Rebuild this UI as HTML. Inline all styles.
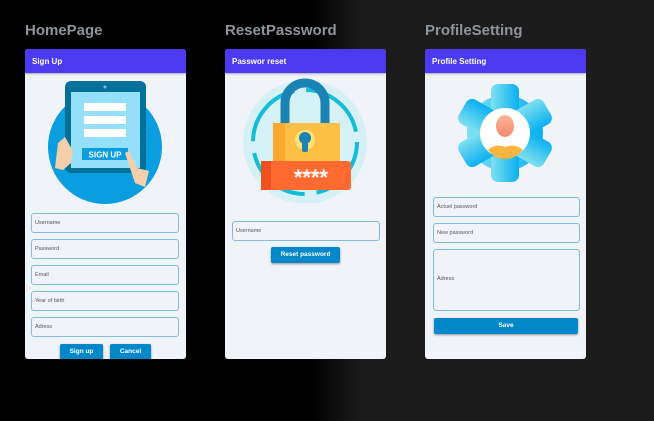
<!DOCTYPE html>
<html><head><meta charset="utf-8"><style>
*{margin:0;padding:0;box-sizing:border-box}
body{width:654px;height:421px;overflow:hidden;position:relative;font-family:"Liberation Sans",sans-serif;background:linear-gradient(90deg,#000 0,#000 310px,#1b1b1b 360px,#1c1c1c 100%)}
.t{position:absolute;top:22px;font-size:15px;font-weight:bold;color:#8e949b}
.card{position:absolute;top:49px;width:161px;height:310px;background:#f0f3f8;border-radius:3px;overflow:hidden}
.hd{height:24px;background:#4b3aef;color:#fff;font-size:8px;font-weight:bold;padding:8px 7px;box-shadow:0 1px 2px rgba(0,0,0,.3)}
.in{position:absolute;border:1px solid #7fbde0;border-radius:3px;height:20px;font-size:5.5px;color:#555;padding:6px 3px}
.btn{position:absolute;background:#0287c8;color:#fff;font-size:6.5px;font-weight:bold;text-align:center;border-radius:2px;box-shadow:0 1px 2px rgba(0,0,0,.4);height:16px;line-height:16px}
</style></head><body>
<div class="t" style="left:25px">HomePage</div>
<div class="t" style="left:225px">ResetPassword</div>
<div class="t" style="left:425px">ProfileSetting</div>

<div class="card" style="left:25px"><div class="hd">Sign Up</div>
<svg style="position:absolute;left:0;top:24px" width="161" height="140">
<circle cx="80" cy="74" r="57" fill="#0a9ee0"/>
<rect x="40" y="8" width="81" height="92" rx="6" fill="#03719a"/>
<circle cx="80" cy="14" r="1.5" fill="#9ad"/>
<rect x="46" y="19" width="69" height="76" fill="#94e0fb"/>
<rect x="59" y="30" width="42" height="8" fill="#fff"/>
<rect x="59" y="43" width="42" height="8" fill="#fff"/>
<rect x="59" y="56" width="42" height="8" fill="#fff"/>
<rect x="57" y="75" width="46" height="12" fill="#0a9ee0"/>
<text x="80" y="84.5" fill="#fff" font-size="8" font-weight="bold" text-anchor="middle" font-family="Liberation Sans">SIGN UP</text>
<path d="M33 70 L40 64 L48 78 L46 90 L38 97 L30 95 Z" fill="#f5cfa9"/>
<path d="M100 80 L104 78 L112 95 L124 98 L120 114 L110 110 Z" fill="#f5cfa9"/>
</svg>
<div class="in" style="left:6px;top:164px;width:148px">Username</div>
<div class="in" style="left:6px;top:190px;width:148px">Password</div>
<div class="in" style="left:6px;top:216px;width:148px">Email</div>
<div class="in" style="left:6px;top:242px;width:148px">Year of birth</div>
<div class="in" style="left:6px;top:268px;width:148px">Adress</div>
<div class="btn" style="left:35px;top:295px;width:43px">Sign up</div>
<div class="btn" style="left:85px;top:295px;width:41px">Cancel</div>
</div>

<div class="card" style="left:225px"><div class="hd">Passwor reset</div>
<svg style="position:absolute;left:0;top:24px" width="161" height="130">
<circle cx="80" cy="69" r="62" fill="#d6f1f5"/>
<circle cx="80" cy="69" r="52" fill="none" stroke="#13bcd8" stroke-width="4" stroke-dasharray="70 12"/>
<path d="M60 53 V30 A20 20 0 0 1 100 30 V53" fill="none" stroke="#1b82b4" stroke-width="9"/>
<rect x="48" y="50" width="67" height="45" fill="#fdc045"/>
<rect x="48" y="50" width="12" height="45" fill="#fba830"/>
<circle cx="80" cy="67" r="10" fill="#fde27a"/>
<circle cx="80" cy="65" r="6" fill="#1b82b4"/>
<rect x="77" y="65" width="6" height="14" rx="2" fill="#1b82b4"/>
<rect x="36" y="88" width="90" height="29" rx="3" fill="#fe6a30"/>
<rect x="36" y="88" width="10" height="29" fill="#f0501e"/>
<text x="86" y="112" fill="#fff" font-size="22" font-weight="bold" text-anchor="middle" font-family="Liberation Sans">****</text>
</svg>
<div class="in" style="left:7px;top:172px;width:148px">Username</div>
<div class="btn" style="left:46px;top:198px;width:69px">Reset password</div>
</div>

<div class="card" style="left:425px"><div class="hd">Profile Setting</div>
<svg style="position:absolute;left:0;top:24px" width="161" height="120">
<defs><linearGradient id="g" x1="0" x2="1"><stop offset="0" stop-color="#80e0f0"/><stop offset="1" stop-color="#0ab0f0"/></linearGradient>
<linearGradient id="f" x1="0" y1="0" x2="0" y2="1"><stop offset="0" stop-color="#f9b494"/><stop offset="1" stop-color="#f48a6c"/></linearGradient></defs>
<g fill="url(#g)">
<circle cx="80" cy="60" r="38"/>
<rect x="66" y="11" width="28" height="98" rx="7"/>
<rect x="66" y="11" width="28" height="98" rx="7" transform="rotate(60 80 60)"/>
<rect x="66" y="11" width="28" height="98" rx="7" transform="rotate(-60 80 60)"/>
</g>
<circle cx="80" cy="60" r="25" fill="#fff"/>
<ellipse cx="80" cy="53" rx="9" ry="11" fill="url(#f)"/>
<path d="M63 77 Q70 70 80 74 Q90 70 98 77 Q90 86 80 86 Q70 86 63 77Z" fill="#f8b540"/>
</svg>
<div class="in" style="left:8px;top:148px;width:147px">Actuel password</div>
<div class="in" style="left:8px;top:174px;width:147px">New password</div>
<div class="in" style="left:8px;top:200px;width:147px;height:62px;padding-top:26px">Adress</div>
<div class="btn" style="left:9px;top:269px;width:144px">Save</div>
</div>
</body></html>
